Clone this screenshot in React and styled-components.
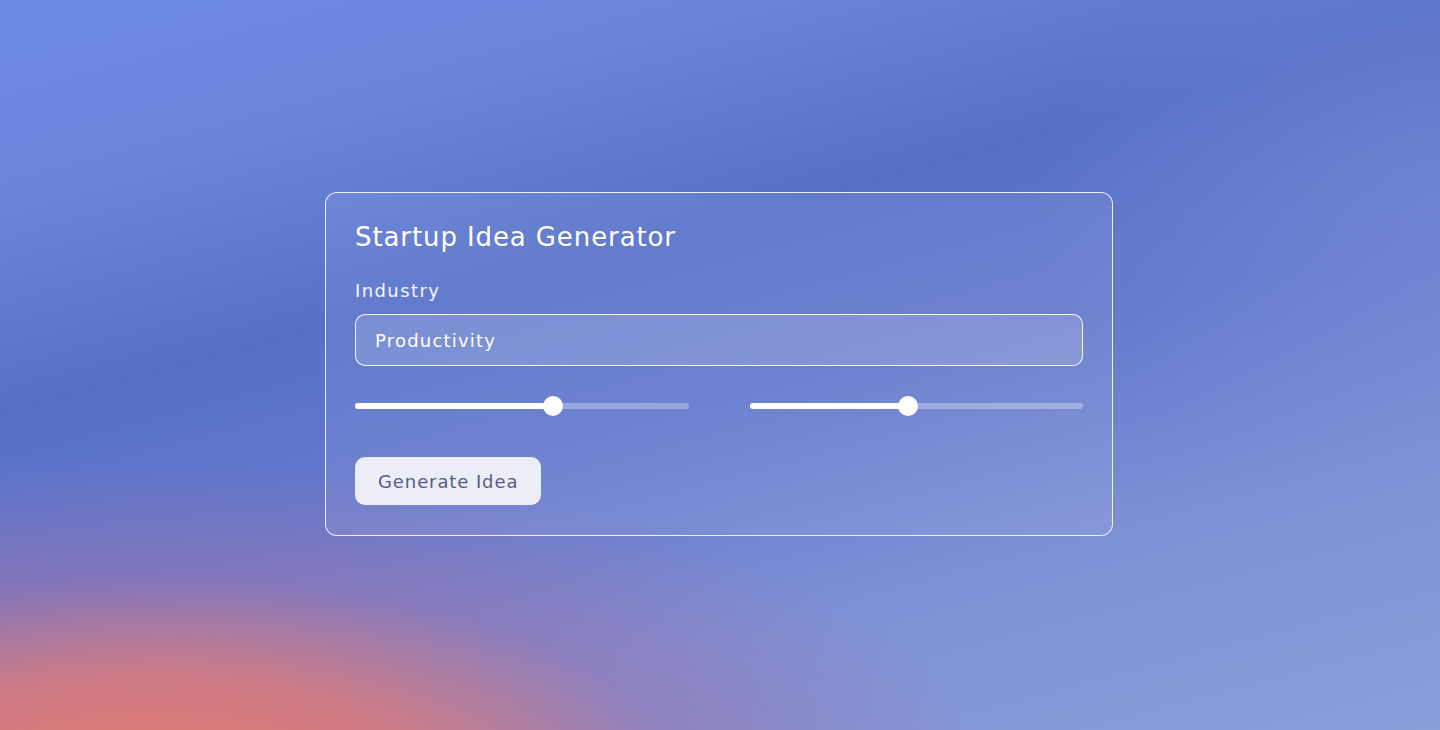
import React, { useState } from "react";
import styled, { createGlobalStyle } from "styled-components";

const Global = createGlobalStyle`
  html, body { margin: 0; padding: 0; }
  body { font-family: "DejaVu Sans", Inter, sans-serif; }
  * { box-sizing: border-box; }
`;

const Page = styled.div`
  width: 1440px;
  height: 730px;
  padding-right: 2px;
  padding-bottom: 2px;
  display: flex;
  align-items: center;
  justify-content: center;
  overflow: hidden;
  background:
    radial-gradient(ellipse 840px 320px at 150px 780px,
      rgba(232, 122, 108, 1) 0%,
      rgba(212, 122, 128, 0.92) 33%,
      rgba(155, 115, 172, 0.55) 63%,
      rgba(120, 112, 185, 0) 100%),
    radial-gradient(ellipse 400px 300px at 1440px 200px,
      rgba(130, 150, 215, 0.4) 0%,
      rgba(130, 150, 215, 0) 100%),
    linear-gradient(165deg,
      #6d8ae2 0%,
      #6a85dc 18%,
      #5670c8 37%,
      #6479cd 55%,
      #7d91d6 75%,
      #8a9ed8 100%);
`;

const Card = styled.div`
  width: 788px;
  padding: 28px 29px 30px;
  border: 1px solid rgba(255, 255, 255, 0.88);
  border-radius: 12px;
  background: rgba(255, 255, 255, 0.08);
  display: flex;
  flex-direction: column;
`;

const Title = styled.h1`
  margin: 0;
  font-size: 26px;
  line-height: 32px;
  font-weight: 400;
  letter-spacing: 0.9px;
  color: #ffffff;
`;

const Label = styled.label`
  margin-top: 26px;
  font-size: 18px;
  line-height: 24px;
  letter-spacing: 1.4px;
  color: #f4f6ff;
`;

const Input = styled.input`
  margin-top: 11px;
  height: 52px;
  width: 100%;
  padding: 0 19px;
  border: 1.5px solid rgba(255, 255, 255, 0.92);
  border-radius: 10px;
  background: rgba(255, 255, 255, 0.15);
  color: #ffffff;
  font-family: inherit;
  font-size: 18px;
  letter-spacing: 1.2px;
  outline: none;
`;

const SliderRow = styled.div`
  margin-top: 30px;
  display: grid;
  grid-template-columns: 1fr 1fr;
  column-gap: 61px;
`;

const Slider = styled.div`
  position: relative;
  height: 20px;
  display: flex;
  align-items: center;
`;

const Track = styled.div`
  width: 100%;
  height: 6px;
  border-radius: 3px;
  background: rgba(255, 255, 255, 0.3);
  position: relative;
`;

const Fill = styled.div`
  position: absolute;
  left: 0;
  top: 0;
  height: 100%;
  border-radius: 3px;
  background: #ffffff;
`;

const Thumb = styled.div`
  position: absolute;
  top: 50%;
  width: 20px;
  height: 20px;
  margin-left: -10px;
  margin-top: -10px;
  border-radius: 50%;
  background: #ffffff;
`;

const Button = styled.button`
  margin-top: 41px;
  align-self: flex-start;
  height: 48px;
  padding: 0 23px;
  border: none;
  border-radius: 10px;
  background: #ecedf6;
  color: #5b5b8b;
  font-family: inherit;
  font-size: 18px;
  letter-spacing: 0.9px;
  cursor: pointer;
`;

function RangeSlider({ value }) {
  const pct = `${value * 100}%`;
  return (
    <Slider>
      <Track>
        <Fill style={{ width: pct }} />
        <Thumb style={{ left: pct }} />
      </Track>
    </Slider>
  );
}

export default function App() {
  const [industry, setIndustry] = useState("Productivity");
  return (
    <>
      <Global />
      <Page>
        <Card>
          <Title>Startup Idea Generator</Title>
          <Label htmlFor="industry">Industry</Label>
          <Input
            id="industry"
            value={industry}
            onChange={(e) => setIndustry(e.target.value)}
          />
          <SliderRow>
            <RangeSlider value={0.595} />
            <RangeSlider value={0.476} />
          </SliderRow>
          <Button>Generate Idea</Button>
        </Card>
      </Page>
    </>
  );
}
